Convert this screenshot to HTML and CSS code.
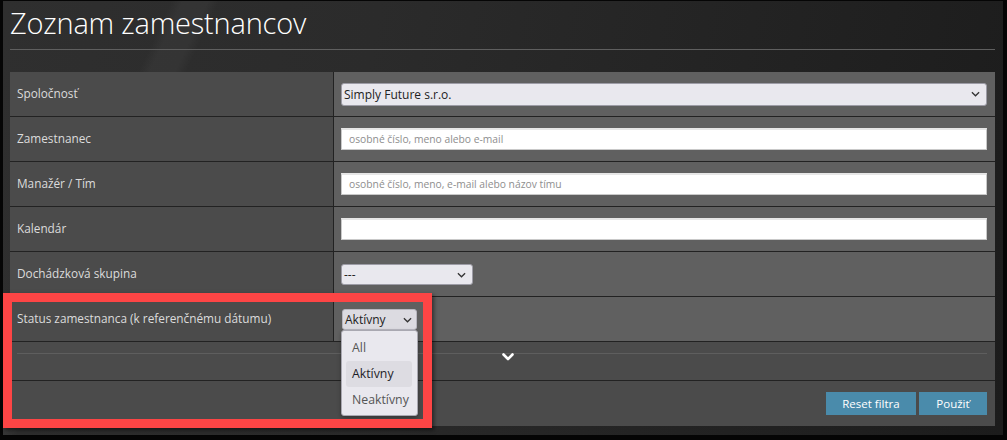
FILE: index.html
```html
<!DOCTYPE html>
<html lang="sk">
<head>
<meta charset="utf-8">
<title>Zoznam zamestnancov</title>
<link rel="stylesheet" href="styles.css">
</head>
<body>
<div class="frame">
  <header class="page-head">
    <h1 class="title">Zoznam zamestnancov</h1>
  </header>

  <section class="filters">
    <div class="row">
      <div class="label">Spoločnosť</div>
      <div class="value">
        <div class="select select-wide"><span>Simply Future s.r.o.</span>
          <svg class="caret" viewBox="0 0 10 6" width="9" height="6"><path d="M1 1l4 4 4-4" fill="none" stroke="#333" stroke-width="1.4"/></svg>
        </div>
      </div>
    </div>
    <div class="row">
      <div class="label">Zamestnanec</div>
      <div class="value"><div class="input placeholder">osobné číslo, meno alebo e-mail</div></div>
    </div>
    <div class="row">
      <div class="label">Manažér / Tím</div>
      <div class="value"><div class="input placeholder">osobné číslo, meno, e-mail alebo názov tímu</div></div>
    </div>
    <div class="row">
      <div class="label">Kalendár</div>
      <div class="value"><div class="input"></div></div>
    </div>
    <div class="row">
      <div class="label">Dochádzková skupina</div>
      <div class="value">
        <div class="select select-group"><span>---</span>
          <svg class="caret" viewBox="0 0 10 6" width="9" height="6"><path d="M1 1l4 4 4-4" fill="none" stroke="#333" stroke-width="1.4"/></svg>
        </div>
      </div>
    </div>
    <div class="row">
      <div class="label">Status zamestnanca (k referenčnému dátumu)</div>
      <div class="value">
        <div class="select select-status"><span>Aktívny</span>
          <svg class="caret" viewBox="0 0 10 6" width="9" height="6"><path d="M1 1l4 4 4-4" fill="none" stroke="#333" stroke-width="1.4"/></svg>
        </div>
      </div>
    </div>
    <div class="expand">
      <div class="expand-line"></div>
      <div class="expand-toggle">
        <svg viewBox="0 0 12 8" width="12" height="8"><path d="M1.5 1.5l4.5 4.5 4.5-4.5" fill="none" stroke="#fff" stroke-width="2.6" stroke-linecap="round" stroke-linejoin="round"/></svg>
      </div>
    </div>
    <div class="actions">
      <button class="btn btn-reset" type="button">Reset filtra</button>
      <button class="btn btn-apply" type="button">Použiť</button>
    </div>
  </section>

  <ul class="dropdown">
    <li class="option">All</li>
    <li class="option selected">Aktívny</li>
    <li class="option">Neaktívny</li>
  </ul>

  <div class="highlight"></div>
</div>
</body>
</html>
```

FILE: styles.css
```css
html, body {
  margin: 0;
  padding: 0;
  background: #050505;
}

body {
  width: 1007px;
  height: 440px;
  overflow: hidden;
  font-family: "Open Sans", "Noto Sans", sans-serif;
}

.frame {
  position: relative;
  box-sizing: border-box;
  width: 1000px;
  height: 434px;
  margin: 1px 0 0 3px;
  padding: 0 8px 0 7px;
  background:
    linear-gradient(115deg, transparent 0 14%, rgba(255,255,255,0.035) 15% 17%, transparent 18% 100%),
    linear-gradient(100deg, #2f2f2f 0%, #2b2b2b 35%, #232323 70%, #1c1c1c 100%);
}

.page-head {
  height: 48px;
  border-bottom: 1px solid #5f5f5f;
  margin-bottom: 22px;
}

.title {
  margin: 0;
  padding-top: 3px;
  font-family: "Open Sans", sans-serif;
  font-weight: 300;
  font-size: 29px;
  line-height: 38px;
  color: #ffffff;
  letter-spacing: -0.2px;
}

.filters {
  background: #4b4b4b;
  color: #dcdcdc;
  font-size: 11.8px;
}

.row {
  display: grid;
  grid-template-columns: 324px 1fr;
  height: 44px;
  border-bottom: 1px solid #222222;
}

.label {
  display: flex;
  align-items: center;
  padding: 0 0 2px 7px;
  border-right: 1px solid #222222;
  background: #4b4b4b;
}

.value {
  display: flex;
  align-items: center;
  padding: 0 8px 0 7px;
  background: #606060;
}

.select {
  box-sizing: border-box;
  display: flex;
  align-items: center;
  justify-content: space-between;
  background: #e9e8ee;
  border: 1px solid #9d9ca6;
  border-radius: 3px;
  color: #222;
  font-size: 12px;
  padding: 0 6px 0 2px;
}

.select-wide {
  width: 100%;
  height: 23px;
}

.select-group {
  width: 132px;
  height: 21px;
  margin-top: 1px;
}

.select-status {
  width: 75px;
  height: 21px;
  margin-left: 1px;
  margin-top: 1px;
  background: #dcdbe1;
  border-color: #b8b7c0;
  padding-right: 4px;
  font-size: 12px;
}

.caret {
  flex: none;
}

.input {
  box-sizing: border-box;
  width: 100%;
  height: 22px;
  background: #ffffff;
  border: 1px solid #c9c9c9;
  border-top: 2px solid #e6e6e6;
  padding-left: 7px;
  font-size: 10.3px;
  line-height: 18px;
  color: #8e8e8e;
}

.expand {
  height: 39px;
  border-bottom: 1px solid #222222;
  padding: 11px 8px 0 7px;
  box-sizing: border-box;
}

.expand-line {
  height: 1px;
  background: #5e5e5e;
}

.expand-toggle {
  display: flex;
  justify-content: center;
  padding-left: 12px;
  margin-top: -1px;
}

.actions {
  height: 45px;
  display: flex;
  justify-content: flex-end;
  align-items: flex-start;
  gap: 3px;
  padding: 11px 8px 0 0;
  box-sizing: border-box;
}

.btn {
  height: 23px;
  border: 0;
  background: #4a8bab;
  color: #ffffff;
  font-family: "Open Sans", sans-serif;
  font-size: 11.5px;
  padding: 0;
  cursor: pointer;
}

.btn-reset { width: 90px; }
.btn-apply { width: 68px; }

.dropdown {
  position: absolute;
  left: 338px;
  top: 329px;
  width: 77px;
  height: 86px;
  box-sizing: border-box;
  margin: 0;
  padding: 4px 5px 0 4px;
  list-style: none;
  background: #e9e8ee;
  border: 1px solid #a9a8b1;
  border-radius: 3px;
  box-shadow: 0 2px 4px rgba(0,0,0,0.3);
  font-size: 12.3px;
  color: #555;
}

.option {
  height: 26px;
  line-height: 26px;
  padding-left: 6px;
  border-radius: 3px;
}

.option.selected {
  background: #dddce2;
  color: #1d1d28;
}

.highlight {
  position: absolute;
  left: 0;
  top: 292px;
  width: 429px;
  height: 135px;
  box-sizing: border-box;
  border: 9px solid #fd4545;
  box-shadow: 2px 2px 4px rgba(0,0,0,0.5);
  pointer-events: none;
}
```
